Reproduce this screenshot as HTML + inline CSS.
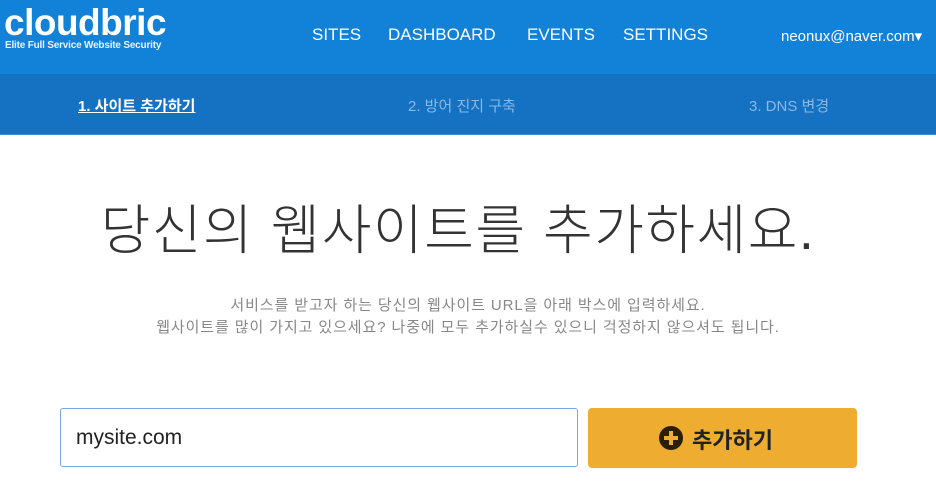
<!DOCTYPE html>
<html><head><meta charset="utf-8"><style>
body{margin:0;width:936px;height:493px;overflow:hidden;background:#fff;font-family:"Liberation Sans","Noto Sans CJK KR",sans-serif;position:relative}
.top{position:absolute;left:0;top:0;width:936px;height:74px;background:#1182d8}
.logo{position:absolute;left:4px;top:2px;color:#fff;font-size:37px;font-weight:bold;letter-spacing:-0.5px}
.tag{position:absolute;left:5px;top:40px;color:#e8f2fb;font-size:10px;font-weight:bold;letter-spacing:-0.2px}
.nav{position:absolute;top:25px;color:#fff;font-size:17px}
.sub{position:absolute;left:0;top:74px;width:936px;height:60px;background:#1572c2;border-bottom:1px solid #3b8fd6}
.st{position:absolute;top:95px;font-size:15px;color:#89b8e4}
h1{position:absolute;left:0;width:916px;top:186px;margin:0;text-align:center;font-weight:300;font-size:54px;color:#333;letter-spacing:1.5px}
.p{position:absolute;left:0;width:936px;text-align:center;font-size:15px;color:#888;line-height:22px;top:295px;letter-spacing:0.9px}
.in{position:absolute;left:60px;top:408px;width:518px;height:59px;border:1px solid #7aa6e6;border-radius:3px;box-sizing:border-box;font-size:21px;color:#222;padding:17px 0 0 15px}
.btn{position:absolute;left:588px;top:408px;width:269px;height:60px;background:#eeac30;border-radius:4px;font-size:22px;font-weight:bold;color:#222}
.pl{position:absolute;left:71px;top:18px;width:24px;height:24px;border-radius:50%;background:#2a1f05}
.pl:before{content:"";position:absolute;left:5px;top:10px;width:14px;height:4px;background:#eeac30}
.pl:after{content:"";position:absolute;left:10px;top:5px;width:4px;height:14px;background:#eeac30}
</style></head><body>
<div class="top">
<div class="logo">cloudbric</div>
<div class="tag">Elite Full Service Website Security</div>
<div class="nav" style="left:312px">SITES</div>
<div class="nav" style="left:388px">DASHBOARD</div>
<div class="nav" style="left:527px">EVENTS</div>
<div class="nav" style="left:623px">SETTINGS</div>
<div class="nav" style="left:781px;top:27px;font-size:15px">neonux@naver.com▾</div>
</div>
<div class="sub"></div>
<div class="st" style="left:78px;color:#fff;text-decoration:underline;font-weight:bold">1. 사이트 추가하기</div>
<div class="st" style="left:408px">2. 방어 진지 구축</div>
<div class="st" style="left:749px">3. DNS 변경</div>
<h1>당신의 웹사이트를 추가하세요.</h1>
<div class="p">서비스를 받고자 하는 당신의 웹사이트 URL을 아래 박스에 입력하세요.<br>웹사이트를 많이 가지고 있으세요? 나중에 모두 추가하실수 있으니 걱정하지 않으셔도 됩니다.</div>
<div class="in">mysite.com</div>
<div class="btn"><div class="pl"></div><span style="position:absolute;left:104px;top:15px">추가하기</span></div>
</body></html>
